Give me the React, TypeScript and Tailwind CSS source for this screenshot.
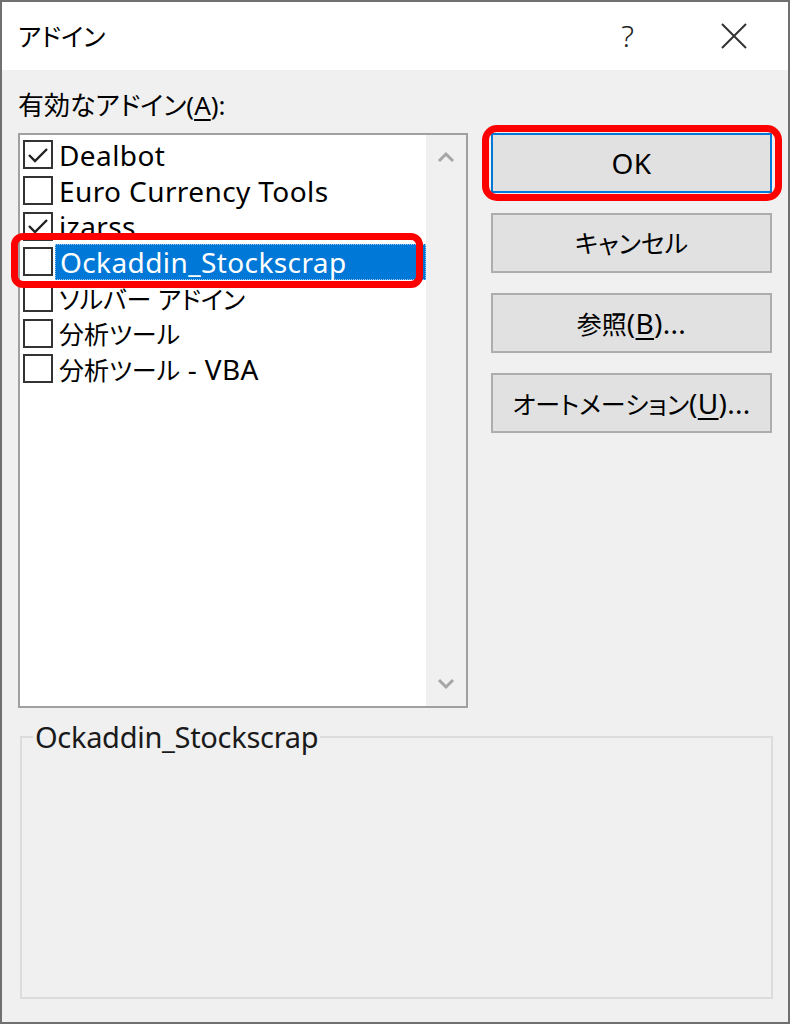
import React from 'react';

const font = { fontFamily: '"Noto Sans", "Noto Sans CJK JP", sans-serif' };

// Latin runs are set a little larger than the Japanese ones, as in the original dialog
const Jp = ({ children }: { children: React.ReactNode }) => (
  <span className="text-[25px] tracking-normal [font-feature-settings:'palt']">{children}</span>
);

const items: { key: string; label: React.ReactNode; checked: boolean; selected?: boolean }[] = [
  { key: 'dealbot', label: 'Dealbot', checked: true },
  { key: 'euro', label: 'Euro Currency Tools', checked: false },
  { key: 'izarss', label: 'izarss', checked: true },
  { key: 'ock', label: 'Ockaddin_Stockscrap', checked: false, selected: true },
  { key: 'solver', label: <Jp>ソルバー アドイン</Jp>, checked: false },
  { key: 'analysis', label: <Jp>分析ツール</Jp>, checked: false },
  { key: 'vba', label: <><Jp>分析ツール</Jp>{' - VBA'}</>, checked: false },
];

function CheckBox({ checked }: { checked: boolean }) {
  return (
    <div className="w-[30px] h-[29px] shrink-0 border-2 border-[#333333] bg-white flex items-center justify-center">
      {checked && (
        <svg width="22" height="18" viewBox="0 0 22 18">
          <path d="M2 9 L8 15 L20 3" fill="none" stroke="#222" strokeWidth="2.4" />
        </svg>
      )}
    </div>
  );
}

function Chevron({ down }: { down?: boolean }) {
  return (
    <svg width="18" height="12" viewBox="0 0 18 12">
      <path d={down ? 'M2 2 L9 9 L16 2' : 'M2 10 L9 3 L16 10'} fill="none" stroke="#a6a6a6" strokeWidth="3" />
    </svg>
  );
}

const btnClass = "h-[60px] w-[281px] bg-[#e1e1e1] border-2 border-[#adadad] text-[28px] tracking-[0.3px] text-black flex items-center justify-center leading-none";

export default function App() {
  return (
    <div style={font} className="w-[790px] h-[1024px] border-2 border-[#707070] bg-[#f0f0f0] flex flex-col text-black">
      <div className="h-[68px] bg-white flex items-center pl-[16px] shrink-0">
        <span className="text-[25px] leading-none [font-feature-settings:'palt']">アドイン</span>
        <span className="ml-auto mr-[86px] text-[30px] leading-none font-light text-[#222]">?</span>
        <svg className="mr-[40px]" width="28" height="28" viewBox="0 0 28 28">
          <path d="M2 2 L26 26 M26 2 L2 26" stroke="#333" strokeWidth="2" />
        </svg>
      </div>

      <div className="flex-1 flex flex-col px-[16px] pt-[20px] pb-[23px]">
        <div className="flex gap-[23px]">
          <div className="flex flex-col">
            <div className="h-[30px] leading-[30px] text-[26px] mb-[13px] [font-feature-settings:'palt']">
              有効なアドイン(<span className="underline underline-offset-4">A</span>):
            </div>
            <div className="relative w-[450px] h-[575px] border-2 border-[#a0a0a0] bg-white flex">
              <div className="flex-1 flex flex-col pt-[2px] pl-[3px]">
                {items.map((it) => (
                  <div key={it.key} className="h-[35.7px] flex items-center gap-[2px]">
                    <CheckBox checked={it.checked} />
                    <div
                      className={
                        'h-full flex items-center pl-[4px] text-[28px] tracking-[0.4px] leading-none whitespace-pre ' +
                        (it.selected ? 'flex-1 bg-[#0078d7] text-white border border-dotted border-[#9cc7ee]' : '')
                      }
                    >
                      <span>{it.label}</span>
                    </div>
                  </div>
                ))}
              </div>
              <div className="w-[40px] bg-[#f0f0f0] flex flex-col items-center justify-between py-[16px]">
                <Chevron />
                <Chevron down />
              </div>
              <div className="absolute left-[-9px] top-[98px] w-[412px] h-[55px] border-[7px] border-[#ff0000] rounded-[12px] pointer-events-none" />
            </div>
          </div>

          <div className="relative flex flex-col gap-[20px] pt-[43px]">
            <div className={btnClass + ' !border-[#0078d7]'}>OK</div>
            <div className={btnClass}><Jp>キャンセル</Jp></div>
            <div className={btnClass}>
              <span><Jp>参照</Jp>(<span className="underline underline-offset-4">B</span>)...</span>
            </div>
            <div className={btnClass}>
              <span><Jp>オートメーション</Jp>(<span className="underline underline-offset-4">U</span>)...</span>
            </div>
            <div className="absolute left-[-9px] top-[35px] w-[300px] h-[76px] border-[7px] border-[#ff0000] rounded-[15px] pointer-events-none" />
          </div>
        </div>

        <fieldset className="mt-[14px] ml-[2px] w-[753px] flex-1 border-2 border-[#dcdcdc]">
          <legend className="ml-[11px] px-[2px] text-[29px] leading-[30px] tracking-[-0.3px] text-[#1a1a1a]">
            Ockaddin_Stockscrap
          </legend>
        </fieldset>
      </div>
    </div>
  );
}
